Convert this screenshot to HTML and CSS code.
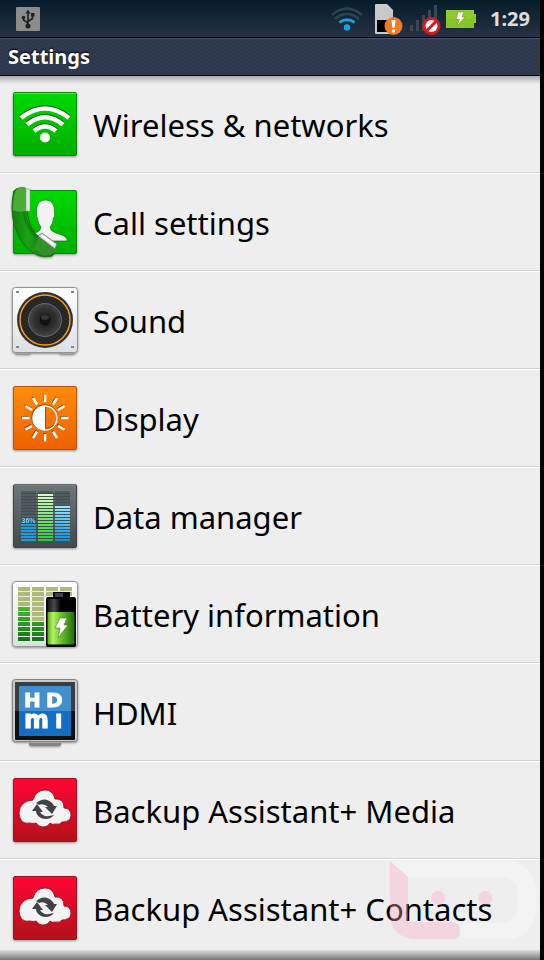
FILE: index.html
```html
<!DOCTYPE html>
<html lang="en">
<head>
<meta charset="utf-8">
<meta name="viewport" content="width=device-width, initial-scale=1">
<title>Settings</title>
<link rel="stylesheet" href="styles.css">
</head>
<body>
<div class="screen">
  <div class="status">
    <svg class="usb" viewBox="0 0 24 24" width="24" height="24" aria-hidden="true">
      <rect width="24" height="24" rx="1" fill="#8b8d8d"/>
      <g fill="none" stroke="#202020" stroke-width="1.6"><path d="M12 19V5M12 16L7.500 13V10M12 14.500L16.500 11.500V8"/></g>
      <path d="M12 2.500L14.500 6.500H9.500Z" fill="#202020"/><circle cx="12" cy="19" r="2.500" fill="#202020"/><circle cx="7.500" cy="10.500" r="1.800" fill="#202020"/><rect x="15" y="6" width="3.500" height="3.500" fill="#202020"/>
    </svg>
    <div class="indicators">
      <svg viewBox="331 0 39 37" width="39" height="37" aria-hidden="true">
        <g fill="none" stroke-width="3"><path d="M332 15Q347 2 362 15M335 19Q347 9 359 19" stroke="#2d4452" stroke-width="2.500"/><path d="M339.500 22.500Q347 17 354.500 22.500" stroke="#1a9fd8"/></g>
        <circle cx="347" cy="27.500" r="3.200" fill="#1a9fd8"/>
      </svg>
      <svg viewBox="374 0 32 37" width="32" height="37" aria-hidden="true">
        <path d="M376 4H387L393 10V33Q393 34 392 34H376Q375 34 375 33V5Q375 4 376 4Z" fill="#c9c9c9"/>
        <rect x="377" y="20" width="13" height="12" fill="#000"/>
        <circle cx="393.500" cy="26" r="9" fill="#f47a20"/>
        <path d="M391.500 20H395.500L394.700 28H392.300Z" fill="#fff"/><circle cx="393.500" cy="31" r="1.700" fill="#fff"/>
      </svg>
      <svg viewBox="410 0 32 37" width="32" height="37" aria-hidden="true">
        <path d="M410 25h3v6h-3zM416 20h3v11h-3zM422 15h3v16h-3zM428 10h3v21h-3zM434 5h3v26h-3z" fill="#3b4854"/>
        <circle cx="431.500" cy="26" r="9" fill="#d9181f"/><circle cx="431.500" cy="26" r="6" fill="#fff"/><path d="M427 30.500L436 21.500" stroke="#d9181f" stroke-width="3"/>
      </svg>
      <svg viewBox="446 0 32 37" width="32" height="37" aria-hidden="true">
        <path d="M446 10h28v4h2v9h-2v5h-28z" fill="#8ecb2c"/><path d="M446 19h28v9h-28z" fill="#7fbd24" opacity=".5"/>
        <path d="M458 12H464L462 17H465L457 26L459.500 19.500H456Z" fill="#fff" stroke="#74952f" stroke-width=".6"/>
      </svg>
      <time class="clock">1:29</time>
    </div>
  </div>
  <header class="titlebar"><h1>Settings</h1></header>
  <nav class="list">
    <a href="#wireless" class="row">
      <svg class="icon" viewBox="6 10 78 78" aria-hidden="true">
        <defs>
          <linearGradient id="green" x2="0" y2="1"><stop stop-color="#00d900"/><stop offset="1" stop-color="#00ad00"/></linearGradient>
          <linearGradient id="orange" x2="0" y2="1"><stop stop-color="#ff8c0a"/><stop offset="1" stop-color="#ec6000"/></linearGradient>
          <linearGradient id="red" x2="0" y2="1"><stop stop-color="#ff0634"/><stop offset="1" stop-color="#b31119"/></linearGradient>
          <linearGradient id="slate" x2="0" y2="1"><stop stop-color="#6d7679"/><stop offset="1" stop-color="#424a4e"/></linearGradient>
          <linearGradient id="paper" x2="0" y2="1"><stop stop-color="#fff"/><stop offset="1" stop-color="#dedfe2"/></linearGradient>
        </defs>
        <rect x="13.500" y="16.500" width="63" height="63" rx="1.500" fill="url(#green)" stroke="#0b8a0b"/>
        <path d="M14.500 17.500H75.500" stroke="#5aea45"/>
        <g fill="none" stroke-width="4.500"><path d="M21 41Q45 22 69 41M27 47.500Q45 33 63 47.500M34 54Q45 45 56 54" stroke="#075f07"/><path d="M21 42Q45 23 69 42M27 48.500Q45 34 63 48.500M34 55Q45 46 56 55" stroke="#fff"/></g>
        <circle cx="45" cy="61.500" r="5" fill="#fff"/>
      </svg>
      <span>Wireless &amp; networks</span>
    </a>
    <a href="#call" class="row">
      <svg class="icon" viewBox="6 10 78 78" aria-hidden="true">
        <defs><linearGradient id="phone"><stop stop-color="#167a10"/><stop offset=".35" stop-color="#18a313"/><stop offset="1" stop-color="#12680f"/></linearGradient></defs>
        <rect x="13.500" y="16.500" width="63" height="63" rx="1.500" fill="url(#green)" stroke="#0b8a0b"/>
        <path d="M32 67Q30 62 35 59Q41 57 41 53Q38 50 37.500 44Q36 43 36.500 39Q36 26 45.500 26Q55 26 54.500 39Q55 43 53.500 44Q53 50 50 53Q50 57 56 59Q68 62 67 67Z" fill="#f2f2f2" stroke="#098209" stroke-width=".7"/>
        <path d="M14 17Q10 33 14 50Q19 70 35 80Q42 84 52 82Q56 79 56 75L40 64Q29 55 27 37L25 14Q17 13 14 17Z" fill="url(#phone)" stroke="#167012" stroke-width="1"/>
        <path d="M24 38Q26 53 37 63" fill="none" stroke="#0c7a0a" stroke-width="3" opacity=".7"/>
        <path d="M13 36Q13 14 20 14H26V37Q18 39 13 36Z" fill="#49ad34"/>
        <path d="M26 15H30V37H26Z" fill="#e3e5e7" stroke="#8e9690" stroke-width=".5"/>
        <path d="M34 74L39 63L56 74V78Q48 83 42 81Z" fill="#329329"/><path d="M38 62L42 59L57 70L55 75Z" fill="#ddd" stroke="#69706a" stroke-width=".8"/><path d="M41 61L54 71" stroke="#fff" stroke-width="2"/>
      </svg>
      <span>Call settings</span>
    </a>
    <a href="#sound" class="row">
      <svg class="icon" viewBox="6 10 78 78" aria-hidden="true">
        <defs><radialGradient id="cone"><stop stop-color="#191919"/><stop offset=".65" stop-color="#303030"/><stop offset="1" stop-color="#464646"/></radialGradient>
        <pattern id="weave" width="3" height="3" patternUnits="userSpaceOnUse" patternTransform="rotate(35)"><rect width="3" height="3" fill="#202020"/><path d="M0 1H3" stroke="#353535"/></pattern></defs>
        <path d="M15 79H30V82H16ZM60 79H75L74 82H60Z" fill="#b5b6b8" stroke="#85878a" stroke-width=".7"/>
        <rect x="12.500" y="15.500" width="65" height="65" rx="3" fill="url(#paper)" stroke="#939496"/>
        <path d="M16 19h3v2h-3zM71 19h3v2h-3zM16 74h3v2h-3zM71 74h3v2h-3z" fill="#84878a"/>
        <circle cx="45" cy="48" r="28" fill="#2e3033"/><circle cx="45" cy="48" r="25" fill="url(#weave)" stroke="#f59b1c" stroke-width="1.500"/>
        <circle cx="45" cy="48" r="16.500" fill="url(#cone)" stroke="#666" stroke-width="1"/><circle cx="45" cy="48" r="5.500" fill="#101010"/><ellipse cx="45" cy="45.500" rx="4" ry="2.500" fill="#383838"/>
      </svg>
      <span>Sound</span>
    </a>
    <a href="#display" class="row">
      <svg class="icon" viewBox="6 10 78 78" aria-hidden="true">
        <rect x="13.500" y="16.500" width="63" height="63" rx="1.500" fill="url(#orange)" stroke="#b85810"/>
        <path d="M44.400 23.700V31.200M44.400 63.200V70.700M21.400 47.200H28.900M60.400 47.200H67.900M32.400 27.200L36.400 33.700M56.400 27.200L52.400 33.700M24.900 35.200L31.400 39.200M63.900 35.200L57.400 39.200M24.900 58.700L31.400 55.200M63.900 58.700L57.400 55.200M32.400 67.200L36.400 60.700M56.400 67.200L52.400 60.700" stroke="#8d4300" stroke-width="2.500"/>
        <path d="M45 24.500V32M45 64V71.500M22 48H29.500M61 48H68.500M33 28L37 34.500M57 28L53 34.500M25.500 36L32 40M64.500 36L58 40M25.500 59.500L32 56M64.500 59.500L58 56M33 68L37 61.500M57 68L53 61.500" stroke="#fff" stroke-width="2.500"/>
        <circle cx="44.700" cy="47.500" r="12.500" fill="none" stroke="#8d4300" stroke-width="1.500"/><circle cx="45" cy="48" r="12" fill="none" stroke="#fff" stroke-width="1.500"/><path d="M45 36A12 12 0 0 0 45 60Z" fill="#fff"/><path d="M45.500 37V58.500Q50 58.500 54 55" fill="none" stroke="#a95000"/>
      </svg>
      <span>Display</span>
    </a>
    <a href="#data" class="row">
      <svg class="icon" viewBox="6 10 78 78" aria-hidden="true">
        <defs>
          <linearGradient id="limebar" x2="0" y2="1"><stop stop-color="#d8ffc0"/><stop offset="1" stop-color="#2dc33a"/></linearGradient>
          <linearGradient id="bluebar" x2="0" y2="1"><stop stop-color="#98eafd"/><stop offset="1" stop-color="#0791dd"/></linearGradient>
          <pattern id="slots" x="0" y="23" width="80" height="3" patternUnits="userSpaceOnUse"><rect y="2" width="80" height="1" fill="#424b4f"/></pattern>
        </defs>
        <rect x="13.500" y="16.500" width="63" height="63" rx="1.500" fill="url(#slate)" stroke="#3e474a"/><path d="M14 17H76" stroke="#849094"/>
        <path d="M21 23H36V48H21ZM38 23H53V27H38ZM55 23H70V38H55Z" fill="#505b5f"/>
        <rect x="21" y="56" width="15" height="17" fill="#159fe2"/><rect x="38" y="26" width="15" height="47" fill="url(#limebar)"/><rect x="55" y="38" width="15" height="35" fill="url(#bluebar)"/>
        <rect x="21" y="23" width="49" height="50" fill="url(#slots)"/>
        <rect x="21" y="49" width="15" height="6" fill="#38515c"/>
        <text x="28.500" y="55" text-anchor="middle" class="percent">36%</text>
      </svg>
      <span>Data manager</span>
    </a>
    <a href="#battery" class="row">
      <svg class="icon" viewBox="6 10 78 78" aria-hidden="true">
        <defs>
          <linearGradient id="cell"><stop stop-color="#57a914"/><stop offset=".2" stop-color="#b7f16a"/><stop offset=".5" stop-color="#65c624"/><stop offset="1" stop-color="#246b10"/></linearGradient>
          <linearGradient id="cap"><stop stop-color="#151515"/><stop offset=".25" stop-color="#4b4b4b"/><stop offset=".5" stop-color="#000"/></linearGradient>
          <linearGradient id="charge" x2="0" y2="1"><stop stop-color="#46bf28"/><stop offset="1" stop-color="#12711c"/></linearGradient>
        </defs>
        <rect x="12.500" y="15.500" width="65" height="65" rx="3" fill="url(#paper)" stroke="#939496"/>
        <path d="M18 21H30V40H18ZM32 21H44V55H32ZM46 21H58V30H46ZM60 21H72V30H60Z" fill="#b0ba78"/>
        <path d="M18 41H30V75H18ZM32 56H44V75H32Z" fill="url(#charge)"/>
        <path d="M18 25.500H72M18 30.500H72M18 35.500H44M18 40.500H44M18 45.500H44M18 50.500H44M18 55.500H44M18 60.500H44M18 65.500H44M18 70.500H44" stroke="#e7ece0"/>
        <path d="M53 31V26H70V31H74Q76 31 76 33V79Q76 81 74 81H48Q46 81 46 79V33Q46 31 48 31Z" fill="#000"/>
        <rect x="55" y="27" width="8" height="4" fill="#414141"/><rect x="47.500" y="33" width="27" height="13" fill="url(#cap)"/>
        <rect x="47.500" y="46" width="27" height="32.500" rx="1" fill="url(#cell)"/>
        <path d="M60 52H67L64 59H68L58 72L60 62H55Z" fill="#fff" stroke="#397b16" stroke-width=".6"/>
      </svg>
      <span>Battery information</span>
    </a>
    <a href="#hdmi" class="row">
      <svg class="icon" viewBox="6 10 78 78" aria-hidden="true">
        <path d="M29 79H61V81L59 82H31L29 81Z" fill="#828488"/>
        <rect x="12.500" y="15.500" width="65" height="62" rx="3" fill="#c9cbcd" stroke="#808285"/>
        <rect x="15" y="18" width="60" height="58" rx="1" fill="#111"/><path d="M15 18H75V47H15Z" fill="#3b3e41"/>
        <rect x="19" y="22" width="52" height="50" fill="#126fc4"/><path d="M19 22H71V47H19Z" fill="#4290cb"/>
        <text y="43" class="hdmi"><tspan x="24">H</tspan><tspan x="46">D</tspan></text>
        <text y="64" class="hdmi"><tspan x="24" class="hdmi-low">m</tspan><tspan x="55">I</tspan></text>
      </svg>
      <span>HDMI</span>
    </a>
    <a href="#media" class="row">
      <svg class="icon" viewBox="6 10 78 78" aria-hidden="true">
        <g id="cloud">
          <rect x="13.500" y="16.500" width="63" height="63" rx="1.500" fill="url(#red)" stroke="#a51320"/>
          <path d="M30 61Q20 63 19 51Q20 39 33 38Q36 28 45 28Q53 28 55 37Q64 36 64 46Q71 46 71 54Q70 60 62 60Q60 63 56 62Q52 63 50 61Q48 65 43 65Q39 65 36 61Q33 62 30 61Z" fill="#f3f3f3" stroke="#871019" stroke-width=".8"/>
          <path d="M36 41Q45 34 52 41Q54 43 54 44H57L52 52L45 45H48Q44 41 39 43Z" fill="#414347"/>
          <path d="M54 53Q49 59 41 56Q36 53 36 49H32L37 42L43 50H40Q43 55 49 54Z" fill="#414347"/>
        </g>
      </svg>
      <span>Backup Assistant+ Media</span>
    </a>
    <a href="#contacts" class="row">
      <svg class="icon" viewBox="6 10 78 78" aria-hidden="true"><use href="#cloud"/></svg>
      <span>Backup Assistant+ Contacts</span>
    </a>
  </nav>
  <svg class="watermark" viewBox="390 861 147 78" aria-hidden="true">
    <path d="M390 861H511Q537 866 537 900Q537 935 511 939H467Q460 938 460 931Q460 923 467 923H500Q518 923 518 905V894Q518 877 500 877H408Z" fill="#fff" opacity=".3"/>
    <path d="M390 861L408 877V922H453Q460 923 460 931Q460 939 452 939H416Q390 938 390 913Z" fill="#fba5c6" opacity=".35"/>
    <circle cx="438" cy="898" r="7" fill="#fba5c6" opacity=".35"/><circle cx="485.500" cy="898" r="7" fill="#fba5c6" opacity=".35"/>
  </svg>
</div>
</body>
</html>
```
FILE: styles.css
```css
* { box-sizing: border-box; }

body {
  margin: 0;
  background: #000;
  font-family: "Noto Sans", "Open Sans", sans-serif;
}

.screen {
  position: relative;
  min-height: 100vh;
  margin-right: 4px;
  padding-bottom: 2px;
  background: #eee;
}

.screen::after {
  content: "";
  position: absolute;
  left: 0;
  right: 0;
  bottom: 0;
  height: 10px;
  background: linear-gradient(#ddd, #777);
}

.status {
  display: flex;
  align-items: center;
  justify-content: space-between;
  height: 38px;
  padding: 0 10px 0 16px;
  border-bottom: 1px solid #000;
  background: linear-gradient(#061c29, #263244);
}

.indicators {
  display: flex;
  align-items: center;
  gap: 4px;
}

.clock {
  margin-left: 8px;
  color: #ddd;
  font-size: 20px;
  font-weight: bold;
  line-height: 36px;
}

.titlebar {
  display: flex;
  align-items: center;
  height: 38px;
  padding: 0 8px;
  border-top: 1px solid #465266;
  border-bottom: 1px solid #000;
  background: repeating-conic-gradient(#2c374c 0 25%, #323c51 0 50%) 0 0 / 4px 4px;
}

.titlebar h1 {
  margin: 0;
  color: #fff;
  font-size: 20px;
  line-height: 28px;
  text-shadow: 0 -1px 2px #000;
}

.list {
  background: linear-gradient(#aaa, #eee 8px);
}

.row {
  display: flex;
  align-items: center;
  gap: 9px;
  height: 98px;
  padding-left: 6px;
  border-bottom: 1px solid #fff;
  box-shadow: inset 0 -1px #d2d2d2;
  color: #000;
  font-size: 31px;
  line-height: 44px;
  text-decoration: none;
  white-space: nowrap;
}

.icon {
  flex: none;
  width: 78px;
  height: 78px;
  filter: drop-shadow(0 1px 1px #0006);
}

.percent {
  fill: #83d4f6;
  font: bold 7px "Liberation Sans", sans-serif;
}

.hdmi {
  fill: #fff;
  stroke: #fff;
  stroke-width: 1px;
  font: bold 20px "DejaVu Sans", sans-serif;
}

.hdmi-low { font-size: 24px; }

.watermark {
  position: absolute;
  right: 3px;
  bottom: 21px;
  width: 147px;
  height: 78px;
  pointer-events: none;
}
```
